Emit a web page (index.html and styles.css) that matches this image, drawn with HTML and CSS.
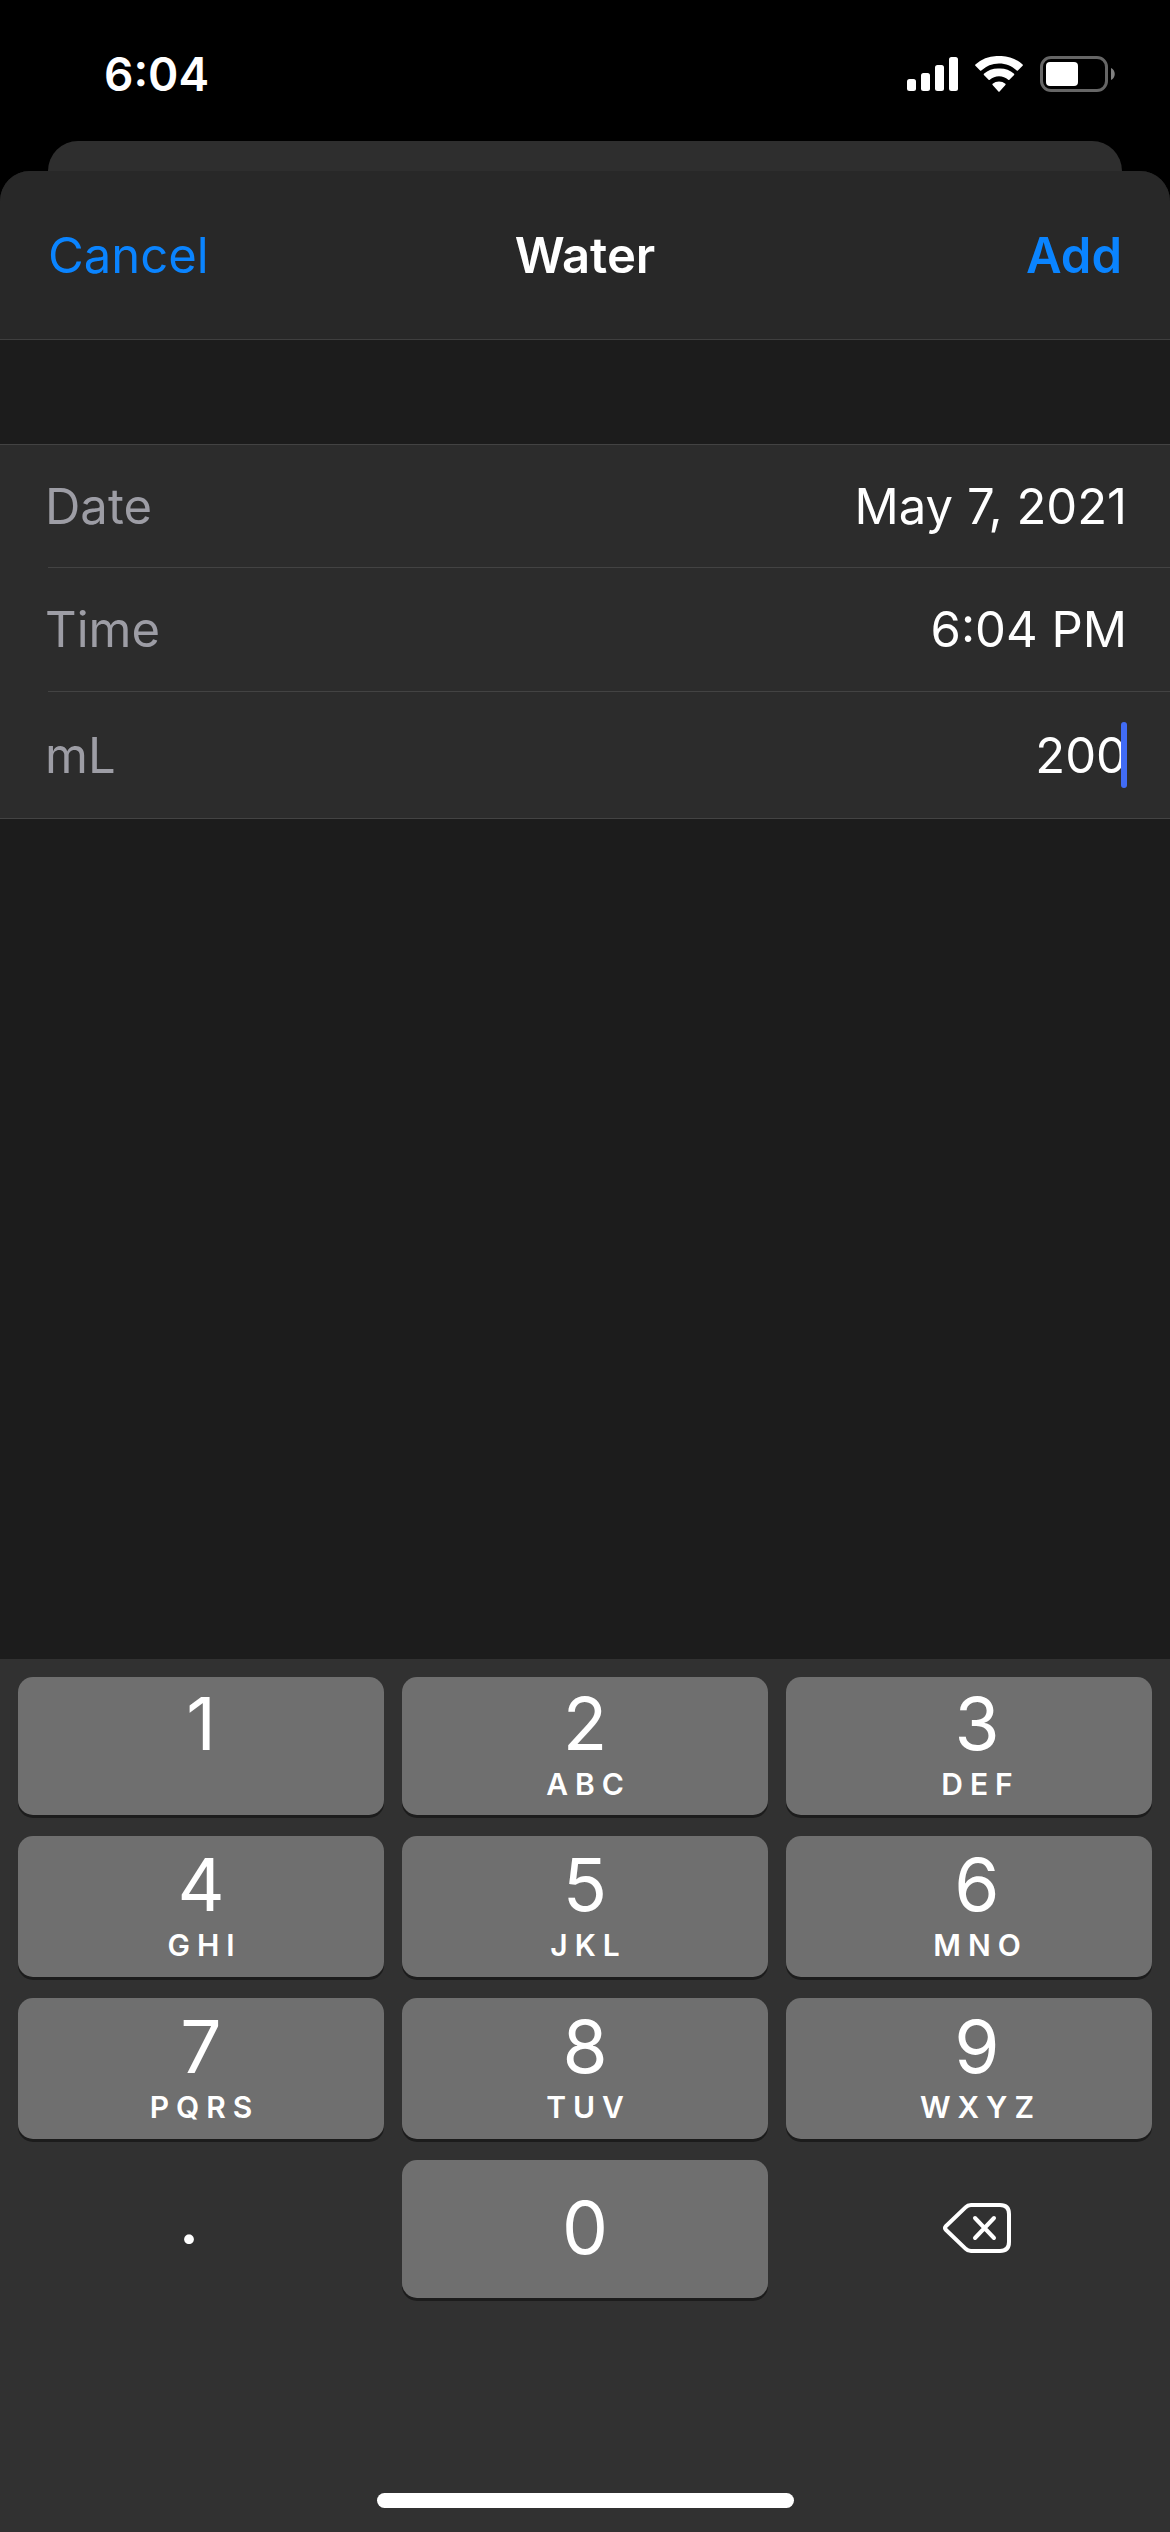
FILE: index.html
```html
<!DOCTYPE html>
<html lang="en">
<head>
    <meta charset="UTF-8">
    <meta name="viewport" content="width=device-width, initial-scale=1.0">
    <title>Water</title>
    <link rel="stylesheet" href="styles.css">
</head>
<body>
    <div class="status-bar">
        <span class="clock">6:04</span>
        <div class="status-icons">
            <svg width="51" height="36" viewBox="0 0 51 36" fill="#fff">
                <rect x="0" y="23" width="9" height="12" rx="2.5"/>
                <rect x="14" y="17" width="9" height="18" rx="2.5"/>
                <rect x="28" y="9" width="9" height="26" rx="2.5"/>
                <rect x="42" y="1" width="9" height="34" rx="2.5"/>
            </svg>
            <svg width="48" height="36" viewBox="0 0 48 36" fill="#fff">
                <path d="M24 7.500c6.800 0 13 2.600 17.700 7.100.4.300.9.300 1.200 0l4.700-4.800c.4-.4.4-.9 0-1.300A34 34 0 0 0 24 0 34 34 0 0 0 .4 8.500c-.4.4-.4.9 0 1.300l4.700 4.800c.3.300.8.300 1.200 0A25.500 25.500 0 0 1 24 7.500z"/>
                <path d="M24 20.200c3.500 0 6.700 1.300 9.200 3.500.4.300.9.300 1.200 0l4.700-4.800c.3-.3.3-.8 0-1.200A22 22 0 0 0 24 12.600a22 22 0 0 0-15.100 5.100c-.3.400-.3.900 0 1.200l4.700 4.800c.3.300.8.300 1.200 0a14 14 0 0 1 9.200-3.500z"/>
                <path d="M30.400 29c.4-.3.400-.9 0-1.200a10 10 0 0 0-12.800 0c-.4.300-.4.900 0 1.200l5.800 6.400c.3.400.9.400 1.200 0z"/>
            </svg>
            <svg width="75" height="36" viewBox="0 0 75 36">
                <rect x="1.500" y="1.500" width="65" height="33" rx="9.500" fill="none" stroke="#666" stroke-width="3"/>
                <rect x="6" y="6" width="32" height="24" rx="4" fill="#fff"/>
                <path d="M71 12c5 2 5 10 0 12z" fill="#808080"/>
            </svg>
        </div>
    </div>
    <div class="back-card"></div>

    <main class="sheet">
        <header class="nav">
            <button type="button" class="nav-button">Cancel</button>
            <h1>Water</h1>
            <button type="submit" form="waterForm" class="nav-button add">Add</button>
        </header>

        <form id="waterForm" class="list">
            <div class="row">
                <label for="date">Date</label>
                <input type="text" id="date" value="May 7, 2021">
            </div>
            <div class="row">
                <label for="time">Time</label>
                <input type="text" id="time" value="6:04 PM">
            </div>
            <div class="row">
                <label for="amount">mL</label>
                <input type="text" id="amount" inputmode="decimal" value="200">
                <span class="caret"></span>
            </div>
        </form>
    </main>

    <div class="keyboard">
        <div class="keys">
            <button type="button" class="key"><span class="digit">1</span><span class="letters"></span></button>
            <button type="button" class="key"><span class="digit">2</span><span class="letters">ABC</span></button>
            <button type="button" class="key"><span class="digit">3</span><span class="letters">DEF</span></button>
            <button type="button" class="key"><span class="digit">4</span><span class="letters">GHI</span></button>
            <button type="button" class="key"><span class="digit">5</span><span class="letters">JKL</span></button>
            <button type="button" class="key"><span class="digit">6</span><span class="letters">MNO</span></button>
            <button type="button" class="key"><span class="digit">7</span><span class="letters">PQRS</span></button>
            <button type="button" class="key"><span class="digit">8</span><span class="letters">TUV</span></button>
            <button type="button" class="key"><span class="digit">9</span><span class="letters">WXYZ</span></button>
            <button type="button" class="key plain point"><span class="digit">.</span></button>
            <button type="button" class="key"><span class="digit">0</span></button>
            <button type="button" class="key plain" aria-label="Delete">
                <svg width="68" height="50" viewBox="0 0 68 50" fill="none" stroke="#fff" stroke-width="4" stroke-linecap="round" stroke-linejoin="round">
                    <path d="M28 2h29c6 0 9 3 9 9v28c0 6-3 9-9 9H28c-2.500 0-4-.8-5.500-2.400L2.800 26.800c-1-1.200-1-2.400 0-3.600L22.500 4.400C24 2.800 25.500 2 28 2z"/>
                    <path d="M32 15l19 20M51 15L32 35"/>
                </svg>
            </button>
        </div>
        <div class="home-indicator"></div>
    </div>
</body>
</html>
```
FILE: styles.css
```css
* {
    box-sizing: border-box;
}
body {
    margin: 0;
    min-height: 100vh;
    display: flex;
    flex-direction: column;
    background: #000;
    color: #fff;
    font-family: Inter, "Liberation Sans", sans-serif;
    font-size: 49px;
}
button,
input {
    font: inherit;
    color: inherit;
    background: none;
    border: none;
    padding: 0;
    margin: 0;
}
button {
    cursor: pointer;
}
svg {
    display: block;
}

/* Status bar */
.status-bar {
    height: 141px;
    padding: 6px 55px 0 104px;
    display: flex;
    align-items: center;
    justify-content: space-between;
}
.clock {
    font-size: 46px;
    font-weight: 600;
}
.status-icons {
    display: flex;
    gap: 17px;
}

/* Sheet */
.back-card {
    height: 60px;
    margin: 0 48px -30px;
    border-radius: 30px 30px 0 0;
    background: #2e2e2e;
}
.sheet {
    flex: 1;
    position: relative;
    border-radius: 30px 30px 0 0;
    background: #1c1c1c;
    overflow: hidden;
}
.nav {
    display: grid;
    grid-template-columns: 1fr auto 1fr;
    align-items: center;
    height: 169px;
    padding: 0 48px;
    background: #282828;
    border-bottom: 1px solid #3f3f3f;
}
.nav h1 {
    margin: 0;
    font-size: 49px;
    font-weight: 600;
}
.nav-button {
    justify-self: start;
    color: #0a84ff;
}
.nav-button.add {
    justify-self: end;
    font-weight: 600;
}

.list {
    margin-top: 104px;
    padding-left: 48px;
    background: #2c2c2c;
    border-top: 1px solid #434343;
    border-bottom: 1px solid #434343;
}
.row {
    position: relative;
    display: flex;
    align-items: center;
    height: 122px;
    padding-right: 43px;
}
.row + .row {
    height: 124px;
    border-top: 1px solid #434343;
}
.row:last-child {
    height: 127px;
}
.row label {
    margin-left: -3px;
    color: #9d9da5;
}
.row input {
    flex: 1;
    min-width: 0;
    text-align: right;
    outline: none;
}
.caret {
    position: absolute;
    top: 30px;
    right: 43px;
    width: 6px;
    height: 66px;
    border-radius: 3px;
    background: #416cf5;
}

/* Keyboard */
.keyboard {
    padding: 18px 18px 24px;
    background: #313131;
}
.keys {
    display: grid;
    grid-template-columns: repeat(3, 1fr);
    grid-template-rows: 138px 141px 141px 138px;
    gap: 21px 18px;
}
.key {
    display: flex;
    flex-direction: column;
    align-items: center;
    justify-content: center;
    gap: 5px;
    padding-bottom: 3px;
    border-radius: 15px;
    background: #6f6f6f;
    box-shadow: 0 3px 0 #1c1c1c;
}
.key:nth-child(3n) {
    padding-left: 16px;
}
.key.plain {
    background: none;
    box-shadow: none;
}
.key.point {
    padding: 0 24px 22px 0;
}
.digit {
    font-size: 73px;
    line-height: 74px;
    font-weight: 400;
}
.letters {
    height: 36px;
    padding-left: 7px;
    font-size: 30px;
    line-height: 36px;
    font-weight: 600;
    letter-spacing: 7px;
}
.home-indicator {
    width: 417px;
    height: 15px;
    margin: 195px auto 0;
    border-radius: 8px;
    background: #fff;
}
```
